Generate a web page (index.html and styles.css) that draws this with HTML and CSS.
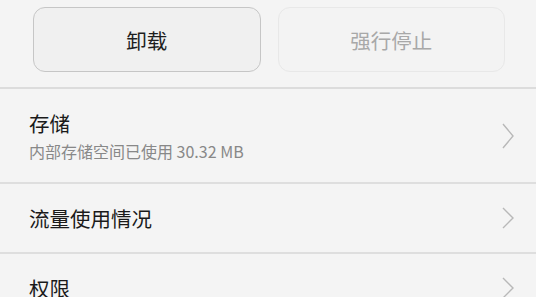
FILE: index.html
```html
<!DOCTYPE html>
<html lang="zh">

<head>
    <meta charset="UTF-8">
    <meta name="viewport" content="width=device-width, initial-scale=1.0">
    <title>应用信息</title>
    <link rel="stylesheet" href="styles.css">
</head>

<body>
    <div id="app-info">
        <!-- 操作按钮 -->
        <div class="actions">
            <button class="action-button">卸载</button>
            <button class="action-button disabled">强行停止</button>
        </div>

        <!-- 设置项 -->
        <div class="item item-tall">
            <div class="item-text">
                <div class="item-title">存储</div>
                <div class="item-sub">内部存储空间已使用 30.32 MB</div>
            </div>
            <svg class="chevron" width="12" height="26" viewBox="0 0 12 26">
                <polyline points="1,1 11,13 1,25" fill="none" stroke="#b8b8b8" stroke-width="1.4" />
            </svg>
        </div>
        <div class="item">
            <div class="item-text">
                <div class="item-title">流量使用情况</div>
            </div>
            <svg class="chevron" width="12" height="22" viewBox="0 0 12 22">
                <polyline points="1,1 11,11 1,21" fill="none" stroke="#b8b8b8" stroke-width="1.4" />
            </svg>
        </div>
        <div class="item">
            <div class="item-text">
                <div class="item-title">权限</div>
            </div>
            <svg class="chevron" width="12" height="22" viewBox="0 0 12 22">
                <polyline points="1,1 11,11 1,21" fill="none" stroke="#b8b8b8" stroke-width="1.4" />
            </svg>
        </div>
    </div>
</body>

</html>
```

FILE: styles.css
```css
body {
    margin: 0;
    padding: 0;
    background: #fff;
    font-family: "Noto Sans CJK SC", "Noto Sans", sans-serif;
    overflow: hidden;
}

#app-info {
    width: 536px;
    height: 297px;
    background: #f4f4f4;
    overflow: hidden;
}

/* 顶部按钮 */
.actions {
    display: flex;
    gap: 17px;
    height: 89px;
    box-sizing: border-box;
    padding: 7px 31px 0 33px;
    border-bottom: 2px solid #dcdcdc;
}

.action-button {
    flex: 1;
    height: 65px;
    font-family: inherit;
    font-size: 20.5px;
    color: #1e1e1e;
    background: #f0f0f0;
    border: 1.5px solid #c6c6c6;
    border-radius: 12px;
}

.action-button.disabled {
    color: #a8a8a8;
    background: #f3f3f3;
    border-color: #e8e8e8;
}

/* 列表项 */
.item {
    display: flex;
    align-items: center;
    justify-content: space-between;
    height: 68px;
    padding: 0 22px 0 29px;
    border-bottom: 2px solid #dedede;
}

.item-tall {
    height: 93px;
}

.item-title {
    font-size: 20.5px;
    line-height: 24px;
    color: #1a1a1a;
}

.item-sub {
    margin-top: 6px;
    font-size: 16px;
    line-height: 20px;
    color: #888;
}

.chevron {
    display: block;
}
```
